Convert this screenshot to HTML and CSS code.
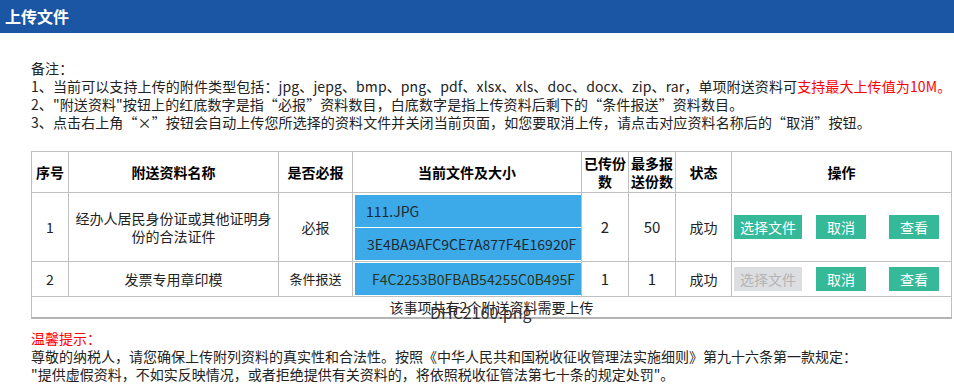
FILE: index.html
```html
<!DOCTYPE html>
<html>

<head>
    <title>上传文件</title>
    <link rel="stylesheet" href="styles.css">
</head>

<body>
    <div class="title-bar">上传文件</div>

    <div class="content">
        <div class="notes">
            <p>备注：</p>
            <p>1、当前可以支持上传的附件类型包括：jpg、jepg、bmp、png、pdf、xlsx、xls、doc、docx、zip、rar，单项附送资料可<span class="red">支持最大上传值为10M。</span></p>
            <p>2、"附送资料"按钮上的红底数字是指“必报”资料数目，白底数字是指上传资料后剩下的“条件报送”资料数目。</p>
            <p>3、点击右上角“×”按钮会自动上传您所选择的资料文件并关闭当前页面，如您要取消上传，请点击对应资料名称后的“取消”按钮。</p>
        </div>

        <table class="file-table">
            <colgroup>
                <col style="width: 37px">
                <col style="width: 210px">
                <col style="width: 74px">
                <col style="width: 229px">
                <col style="width: 47px">
                <col style="width: 47px">
                <col style="width: 56px">
                <col style="width: 220px">
            </colgroup>
            <tr class="head-row">
                <th>序号</th>
                <th>附送资料名称</th>
                <th>是否必报</th>
                <th>当前文件及大小</th>
                <th>已传份数</th>
                <th>最多报送份数</th>
                <th>状态</th>
                <th>操作</th>
            </tr>
            <tr class="row-tall">
                <td>1</td>
                <td>经办人居民身份证或其他证明身份的合法证件</td>
                <td>必报</td>
                <td class="file-cell">
                    <div class="file-item">111.JPG</div>
                    <div class="file-item file-code">3E4BA9AFC9CE7A877F4E16920F</div>
                </td>
                <td class="num">2</td>
                <td class="num">50</td>
                <td>成功</td>
                <td class="ops">
                    <div class="btn-group">
                        <button class="btn btn-wide">选择文件</button>
                        <button class="btn btn-cancel">取消</button>
                        <button class="btn btn-view">查看</button>
                    </div>
                </td>
            </tr>
            <tr class="row-short">
                <td>2</td>
                <td>发票专用章印模</td>
                <td class="small">条件报送</td>
                <td class="file-cell">
                    <div class="file-item file-code2">F4C2253B0FBAB54255C0B495F</div>
                </td>
                <td class="num">1</td>
                <td class="num">1</td>
                <td>成功</td>
                <td class="ops">
                    <div class="btn-group">
                        <button class="btn btn-wide btn-disabled">选择文件</button>
                        <button class="btn btn-cancel">取消</button>
                        <button class="btn btn-view">查看</button>
                    </div>
                </td>
            </tr>
            <tr class="foot-row">
                <td colspan="8">
                    <div class="foot-text">
                        该事项共有2个附送资料需要上传
                        <span class="overflow-name">DHC2160.png</span>
                    </div>
                </td>
            </tr>
        </table>

        <div class="tips">
            <p class="red">温馨提示：</p>
            <p>尊敬的纳税人，请您确保上传附列资料的真实性和合法性。按照《中华人民共和国税收征收管理法实施细则》第九十六条第一款规定：</p>
            <p>"提供虚假资料，不如实反映情况，或者拒绝提供有关资料的，将依照税收征管法第七十条的规定处罚"。</p>
        </div>
    </div>
</body>

</html>
```

FILE: styles.css
```css
body {
    margin: 0;
    font-family: "Noto Sans CJK SC", "Noto Sans", sans-serif;
    font-size: 14px;
    color: #222;
}

p {
    margin: 0;
}

.red {
    color: #f00;
}

.title-bar {
    height: 33px;
    line-height: 32px;
    padding-left: 5px;
    background-color: #1b56a5;
    color: #fff;
    font-size: 16px;
    font-weight: bold;
}

.content {
    padding: 26px 0 0 31px;
}

.notes p {
    line-height: 18px;
    letter-spacing: 0.1px;
}

.file-table {
    margin-top: 20px;
    width: 921px;
    table-layout: fixed;
    border-collapse: collapse;
    border-bottom: 2px solid #b4b4b4;
}

.file-table th,
.file-table td {
    border: 1px solid #c0c0c0;
    padding: 0 4px;
    text-align: center;
    vertical-align: middle;
    line-height: 18px;
}

.file-table th {
    color: #000;
    font-weight: bold;
    padding: 0;
}

.head-row {
    height: 41px;
}

.row-tall {
    height: 69px;
}

.row-short {
    height: 34px;
}

.foot-row td {
    height: 20px;
    padding: 0;
}

.foot-text {
    position: relative;
    line-height: 20px;
}

.small {
    font-size: 13px;
}

.num {
    font-size: 15px;
}

.file-table td.file-cell {
    padding: 1px 0 1px 2px;
}

.file-item {
    height: 32px;
    line-height: 32px;
    padding-left: 11px;
    background-color: #3ca9e9;
    color: #1e2a33;
    text-align: left;
    white-space: nowrap;
    overflow: hidden;
    font-size: 14px;
}

.file-item + .file-item {
    margin-top: 1px;
}

.file-code {
    padding-left: 12px;
}

.file-code2 {
    padding-left: 17px;
    color: #27361a;
}

.file-table td.ops {
    padding: 0;
}

.btn-group {
    display: flex;
    align-items: center;
}

.btn {
    height: 24px;
    border: none;
    padding: 0;
    background-color: #36b999;
    color: #fff;
    font-family: inherit;
    font-size: 14px;
}

.btn-wide {
    width: 68px;
    margin-left: 2px;
}

.btn-cancel {
    width: 50px;
    margin-left: 14px;
}

.btn-view {
    width: 50px;
    margin-left: 23px;
}

.btn-disabled {
    background-color: #dcdee2;
    color: #b4b4b4;
}

.overflow-name {
    position: absolute;
    left: 398px;
    top: 6px;
    font-size: 16px;
    line-height: 18px;
    color: #333;
}

.tips {
    margin-top: 10px;
}

.tips p {
    line-height: 18px;
}
```
